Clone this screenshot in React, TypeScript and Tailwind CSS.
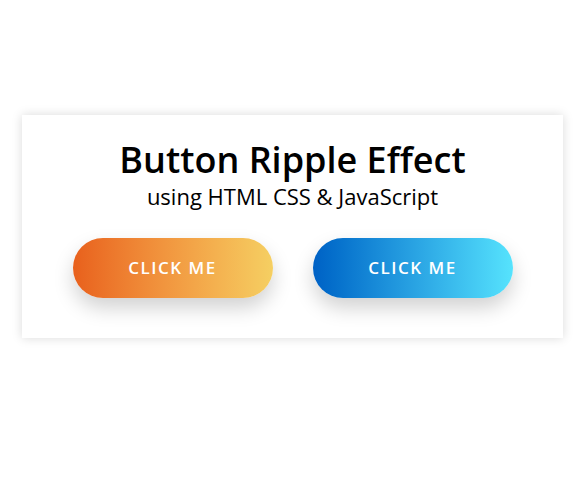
export default function App() {
  return (
    <div className="h-[503px] w-full bg-white pt-[115px] pl-[22px] font-['Open_Sans',sans-serif]">
      <div className="flex w-[541px] h-[223px] flex-col items-center bg-white shadow-[0_0_10px_rgba(0,0,0,0.15)] pt-[21px]">
        <h1 className="text-[36px] font-semibold leading-[48px] text-black">Button Ripple Effect</h1>
        <p className="text-[22px] leading-[24px] text-black">using HTML CSS &amp; JavaScript</p>
        <div className="mt-[30px] flex gap-10">
          <button className="h-[60px] w-[200px] rounded-full bg-gradient-to-r from-[#e8601c] to-[#f5cf62] text-[17px] font-semibold tracking-[1.5px] text-white shadow-[0_10px_20px_rgba(0,0,0,0.18)]">
            CLICK ME
          </button>
          <button className="h-[60px] w-[200px] rounded-full bg-gradient-to-r from-[#0061c5] to-[#56e3fd] text-[17px] font-semibold tracking-[1.5px] text-white shadow-[0_10px_20px_rgba(0,0,0,0.18)]">
            CLICK ME
          </button>
        </div>
      </div>
    </div>
  );
}
